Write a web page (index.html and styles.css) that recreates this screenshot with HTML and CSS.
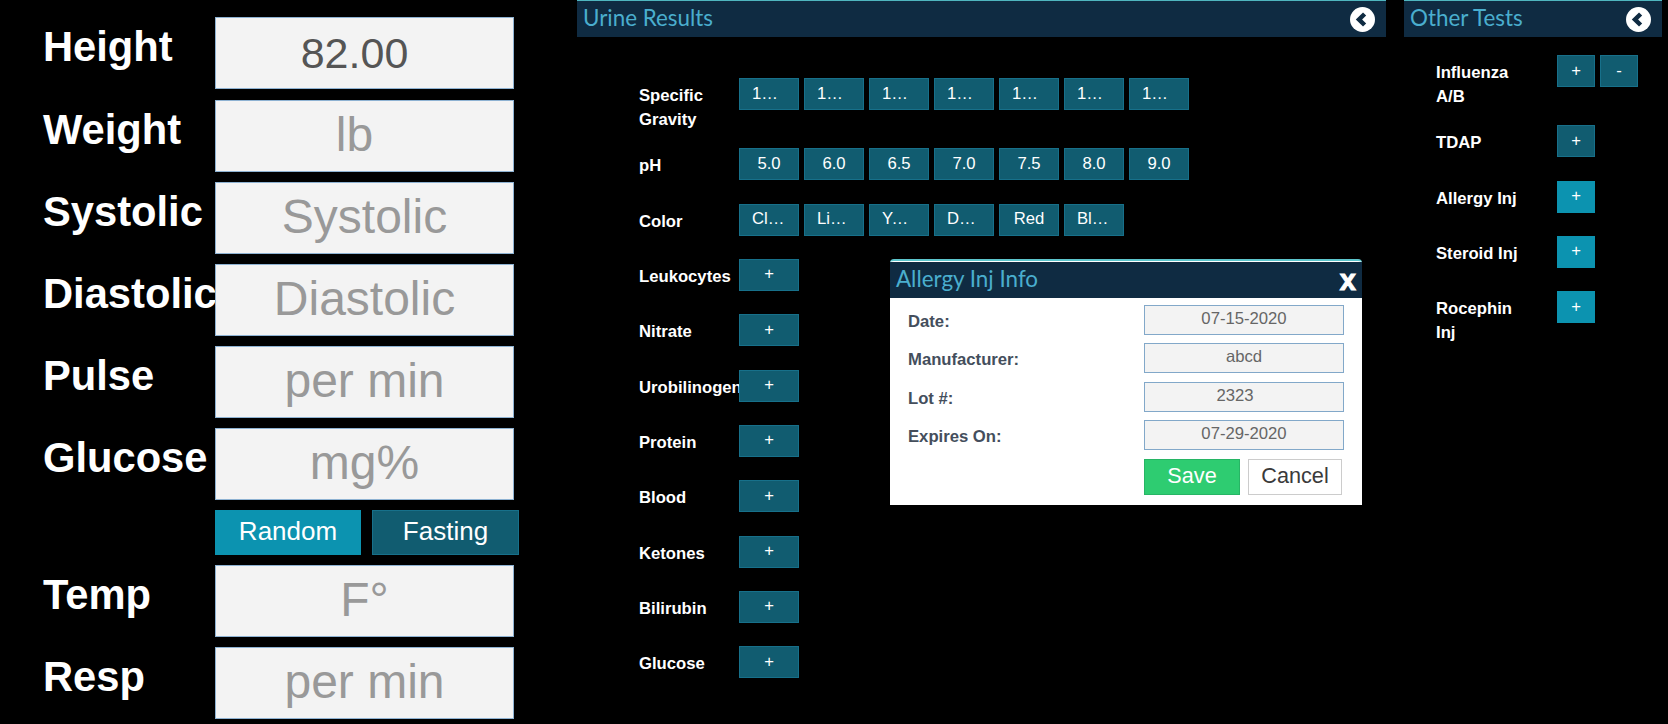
FILE: index.html
```html
<!DOCTYPE html>
<html lang="en">
<head>
    <meta charset="UTF-8">
    <meta name="viewport" content="width=device-width, initial-scale=1.0">
    <title>Vitals and Tests</title>
    <link rel="stylesheet" href="styles.css">
</head>
<body>
    <div class="vitals">
        <div class="vital-row row-wide"><label class="vital-label">Height</label><input class="vital-input num" type="text" value="82.00"></div>
        <div class="vital-row"><label class="vital-label">Weight</label><input class="vital-input num" type="text" placeholder="lb"></div>
        <div class="vital-row"><label class="vital-label">Systolic</label><input class="vital-input" type="text" placeholder="Systolic"></div>
        <div class="vital-row"><label class="vital-label">Diastolic</label><input class="vital-input" type="text" placeholder="Diastolic"></div>
        <div class="vital-row"><label class="vital-label">Pulse</label><input class="vital-input" type="text" placeholder="per min"></div>
        <div class="vital-row"><label class="vital-label">Glucose</label><input class="vital-input" type="text" placeholder="mg%"></div>
        <div class="glucose-type">
            <button class="btn btn-on">Random</button>
            <button class="btn">Fasting</button>
        </div>
        <div class="vital-row"><label class="vital-label">Temp</label><input class="vital-input" type="text" placeholder="F°"></div>
        <div class="vital-row"><label class="vital-label">Resp</label><input class="vital-input" type="text" placeholder="per min"></div>
    </div>

    <div class="panel urine">
        <div class="panel-head">
            <span class="panel-title">Urine Results</span>
            <svg class="back-icon" viewBox="0 0 25 25"><circle cx="12.5" cy="12.5" r="12.5" fill="#fff"/><path d="M14.6 7 L9 12.5 L14.6 18" fill="none" stroke="#0f2b42" stroke-width="4.5"/></svg>
        </div>
        <div class="panel-body">
            <div class="test-row">
                <div class="test-label">Specific Gravity</div>
                <div class="test-btns">
                    <button class="test-btn">1000</button>
                    <button class="test-btn">1005</button>
                    <button class="test-btn">1010</button>
                    <button class="test-btn">1015</button>
                    <button class="test-btn">1020</button>
                    <button class="test-btn">1025</button>
                    <button class="test-btn">1030</button>
                </div>
            </div>
            <div class="test-row">
                <div class="test-label">pH</div>
                <div class="test-btns">
                    <button class="test-btn">5.0</button>
                    <button class="test-btn">6.0</button>
                    <button class="test-btn">6.5</button>
                    <button class="test-btn">7.0</button>
                    <button class="test-btn">7.5</button>
                    <button class="test-btn">8.0</button>
                    <button class="test-btn">9.0</button>
                </div>
            </div>
            <div class="test-row">
                <div class="test-label">Color</div>
                <div class="test-btns">
                    <button class="test-btn">Clear</button>
                    <button class="test-btn">Light</button>
                    <button class="test-btn">Yellow</button>
                    <button class="test-btn">Dark</button>
                    <button class="test-btn">Red</button>
                    <button class="test-btn">Bloody</button>
                </div>
            </div>
            <div class="test-row"><div class="test-label">Leukocytes</div><div class="test-btns"><button class="test-btn">+</button></div></div>
            <div class="test-row"><div class="test-label">Nitrate</div><div class="test-btns"><button class="test-btn">+</button></div></div>
            <div class="test-row"><div class="test-label">Urobilinogen</div><div class="test-btns"><button class="test-btn">+</button></div></div>
            <div class="test-row"><div class="test-label">Protein</div><div class="test-btns"><button class="test-btn">+</button></div></div>
            <div class="test-row"><div class="test-label">Blood</div><div class="test-btns"><button class="test-btn">+</button></div></div>
            <div class="test-row"><div class="test-label">Ketones</div><div class="test-btns"><button class="test-btn">+</button></div></div>
            <div class="test-row"><div class="test-label">Bilirubin</div><div class="test-btns"><button class="test-btn">+</button></div></div>
            <div class="test-row"><div class="test-label">Glucose</div><div class="test-btns"><button class="test-btn">+</button></div></div>
        </div>
    </div>

    <div class="panel other">
        <div class="panel-head">
            <span class="panel-title">Other Tests</span>
            <svg class="back-icon" viewBox="0 0 25 25"><circle cx="12.5" cy="12.5" r="12.5" fill="#fff"/><path d="M14.6 7 L9 12.5 L14.6 18" fill="none" stroke="#0f2b42" stroke-width="4.5"/></svg>
        </div>
        <div class="panel-body">
            <div class="test-row"><div class="test-label">Influenza A/B</div><div class="test-btns"><button class="test-btn">+</button><button class="test-btn">-</button></div></div>
            <div class="test-row"><div class="test-label">TDAP</div><div class="test-btns"><button class="test-btn">+</button></div></div>
            <div class="test-row"><div class="test-label">Allergy Inj</div><div class="test-btns"><button class="test-btn test-btn-on">+</button></div></div>
            <div class="test-row"><div class="test-label">Steroid Inj</div><div class="test-btns"><button class="test-btn test-btn-on">+</button></div></div>
            <div class="test-row"><div class="test-label">Rocephin Inj</div><div class="test-btns"><button class="test-btn test-btn-on">+</button></div></div>
        </div>
    </div>

    <div class="modal">
        <div class="modal-head">
            <span class="panel-title">Allergy Inj Info</span>
            <span class="modal-close">x</span>
        </div>
        <div class="modal-body">
            <div class="modal-row"><label class="modal-label">Date:</label><input class="modal-input" type="text" value="07-15-2020"></div>
            <div class="modal-row"><label class="modal-label">Manufacturer:</label><input class="modal-input" type="text" value="abcd"></div>
            <div class="modal-row"><label class="modal-label">Lot #:</label><input class="modal-input num" type="text" value="2323"></div>
            <div class="modal-row"><label class="modal-label">Expires On:</label><input class="modal-input" type="text" value="07-29-2020"></div>
            <div class="modal-actions">
                <button class="save-btn">Save</button>
                <button class="cancel-btn">Cancel</button>
            </div>
        </div>
    </div>
</body>
</html>
```

FILE: styles.css
```css
body {
    font-family: "Liberation Sans", Arial, sans-serif;
    background-color: black;
    margin: 0;
    padding: 0;
    height: 724px;
    overflow: hidden;
    display: flex;
    align-items: flex-start;
}

/* left column */
.vitals {
    width: 577px;
    flex-shrink: 0;
    box-sizing: border-box;
    padding: 17px 0 0 43px;
}

.vital-row {
    display: flex;
    height: 72px;
    margin-bottom: 10px;
}

.vital-row.row-wide {
    margin-bottom: 11px;
}

.vital-label {
    width: 172px;
    flex-shrink: 0;
    padding-top: 6px;
    color: #fff;
    font-size: 41.7px;
    font-weight: bold;
    line-height: 47px;
    white-space: nowrap;
}

.vital-input {
    width: 299px;
    height: 72px;
    box-sizing: border-box;
    margin: 0;
    padding: 0;
    position: relative;
    border: 1px solid #8eb2d2;
    background-color: #f3f3f3;
    color: #555;
    font-family: inherit;
    font-size: 43px;
    text-align: center;
}

.vital-input.num {
    padding-right: 20px;
}

.vital-input::placeholder {
    color: #999;
    opacity: 1;
    font-size: 48px;
}

.glucose-type {
    display: flex;
    gap: 11px;
    margin: 0 0 10px 172px;
}

.btn {
    width: 147px;
    height: 45px;
    padding: 0 0 3px;
    border: 1px solid #17708a;
    background-color: #115c70;
    color: #fff;
    font-family: inherit;
    font-size: 26px;
}

.btn-on {
    width: 146px;
    border-color: #0c93b0;
    background-color: #0c93b0;
}

/* panels */
.panel-head {
    height: 37px;
    box-sizing: border-box;
    display: flex;
    align-items: center;
    justify-content: space-between;
    border-top: 1px solid #4fb6bf;
    background-color: #0f2b42;
}

.panel-title {
    color: #4aaece;
    font-family: Lato, sans-serif;
    font-size: 22.4px;
    font-weight: 400;
    padding-bottom: 4px;
}

.back-icon {
    width: 25px;
    height: 25px;
}

.urine {
    width: 809px;
    flex-shrink: 0;
}

.urine .panel-head {
    padding: 0 11px 0 6px;
}

.urine .panel-body {
    padding: 41px 0 0 62px;
}

.other {
    width: 258px;
    flex-shrink: 0;
    margin-left: 18px;
}

.other .panel-head {
    padding: 0 11px 0 6px;
}

.other .panel-body {
    padding: 18px 0 0 32px;
}

.test-row {
    display: flex;
    margin-bottom: 17.32px;
}

.test-label {
    width: 100px;
    flex-shrink: 0;
    padding-top: 6px;
    color: #fff;
    font-size: 16.68px;
    font-weight: bold;
    line-height: 23.5px;
}

.other .test-label {
    width: 95px;
    margin-right: 26px;
}

.test-btns {
    display: flex;
    gap: 5px;
    height: 38px;
}

.test-btn {
    width: 60px;
    height: 32px;
    box-sizing: border-box;
    padding: 0 12px 1px;
    border: 1px solid #17708a;
    background-color: #115c70;
    color: #fff;
    font-family: inherit;
    font-size: 16.68px;
    overflow: hidden;
    white-space: nowrap;
    text-overflow: ellipsis;
}

.other .test-btn {
    width: 38px;
    padding: 0 0 1px;
}

.test-btn-on {
    border-color: #0c93b0;
    background-color: #0c93b0;
}

/* popup over the page */
.modal {
    position: absolute;
    left: 890px;
    top: 259px;
    width: 472px;
    height: 246px;
    box-sizing: border-box;
    padding-top: 1px;
    border-top: 2px solid #5cc5cc;
    border-radius: 4px 4px 0 0;
    background-color: #fff;
}

.modal-head {
    height: 36px;
    display: flex;
    align-items: center;
    justify-content: space-between;
    padding: 0 6px;
    background-color: #0f2b42;
}

.modal-close {
    color: #fff;
    font-size: 29px;
    font-weight: bold;
    line-height: 30px;
    -webkit-text-stroke: 1px #fff;
}

.modal-body {
    padding: 7px 18px 0;
}

.modal-row {
    display: flex;
    margin-bottom: 8.3px;
}

.modal-label {
    width: 236px;
    padding-top: 5px;
    color: #444e5c;
    font-size: 16.68px;
    font-weight: bold;
    line-height: 23.2px;
}

.modal-input {
    width: 200px;
    height: 30px;
    box-sizing: border-box;
    margin: 0;
    padding: 0 0 2px;
    border: 1px solid #82a8c9;
    background-color: #f3f3f3;
    color: #666;
    font-family: inherit;
    font-size: 16.68px;
    text-align: center;
}

.modal-input.num {
    padding-right: 18px;
}

.modal-actions {
    display: flex;
    gap: 8px;
    margin: 9px 0 0 236px;
}

.save-btn, .cancel-btn {
    height: 36px;
    box-sizing: border-box;
    padding: 0 0 2px;
    font-family: inherit;
    font-size: 21.68px;
}

.save-btn {
    width: 96px;
    border: 1px solid #27b565;
    background-color: #2ecc71;
    color: #fff;
}

.cancel-btn {
    width: 94px;
    border: 1px solid #ccc;
    background-color: #fff;
    color: #3a3a3a;
}
```
